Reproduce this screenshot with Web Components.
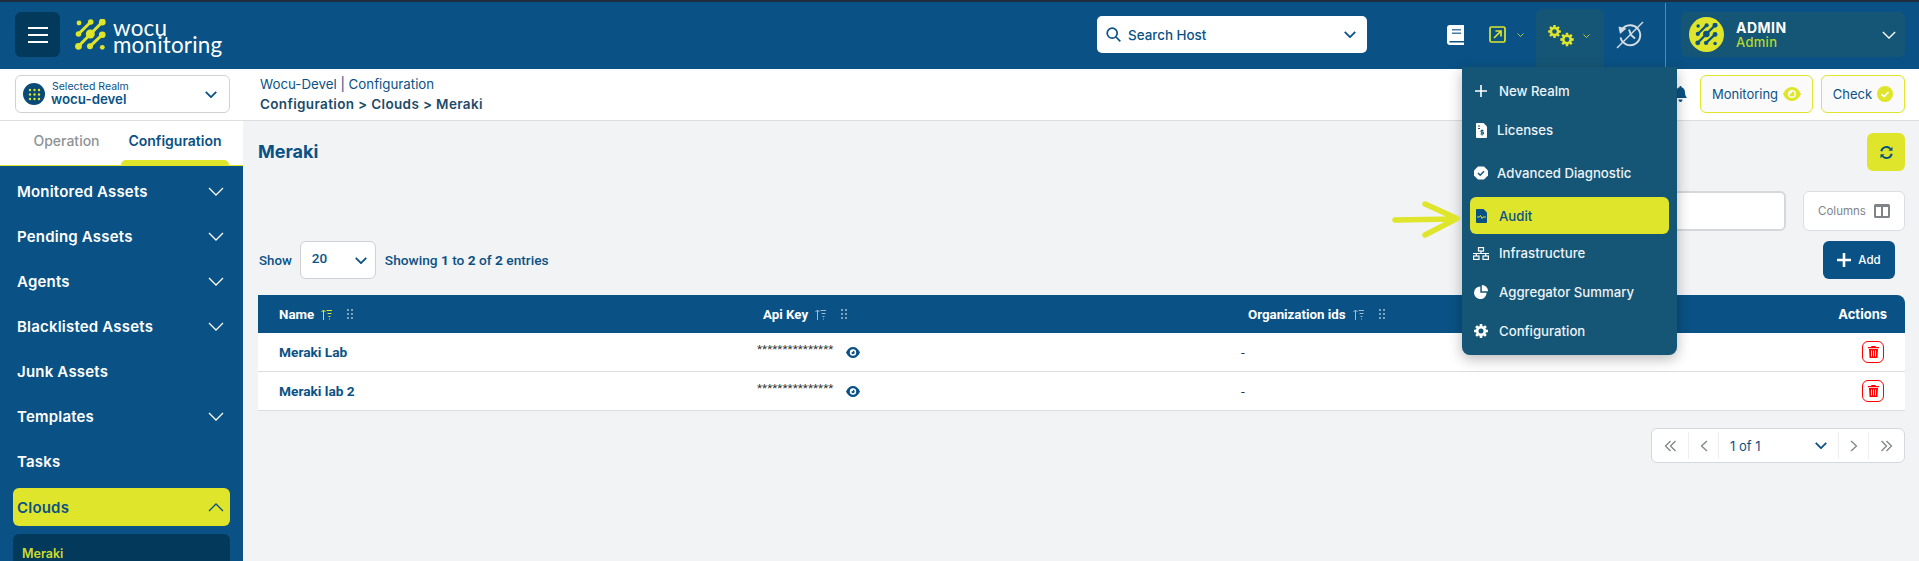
<!DOCTYPE html>
<html lang="en">
<head>
<meta charset="utf-8">
<title>Meraki</title>
<style>
  html, body { margin: 0; height: 561px; overflow: hidden; background: #f2f3f5; }
  body { font-family: Inter, "Liberation Sans", sans-serif; color: #0a5285; }
  wocu-app { width: 1919px; height: 561px; }
</style>
</head>
<body>
<wocu-app></wocu-app>
<script>
const chevron = (w, h, sw, c) => `<svg width="${w}" height="${h}" viewBox="0 0 16 9" fill="none" stroke="${c}" stroke-width="${sw}"><path d="M1 1l7 7 7-7"/></svg>`;
const nodes = (c) => `<g fill="${c}">
  <path fill="none" stroke="${c}" stroke-width="3" d="M27.300 3L3.500 27.300M15.700 3L3.500 15M27.300 15.700L15 27.300"/>
  <circle cx="4" cy="4" r="2.400"/><circle cx="15.700" cy="3" r="2.800"/><circle cx="27.300" cy="3" r="3.400"/>
  <circle cx="3.500" cy="15" r="2.800"/><circle cx="15.300" cy="15" r="4.500"/><circle cx="27.300" cy="15.700" r="3.300"/>
  <circle cx="3.500" cy="27.300" r="3.400"/><circle cx="15" cy="27.300" r="3"/><circle cx="27.300" cy="28.300" r="2.400"/></g>`;
// toothed wheel with a hole, used by the settings icons
const gear = (cx, cy, r, c) => {
  const pts = [];
  for (let i = 0; i < 8; i++) {
    const a = i * Math.PI / 4;
    [[-.30, .72], [-.17, 1], [.17, 1], [.30, .72]].forEach(([o, k]) => {
      pts.push(`${(cx + Math.cos(a + o) * r * k).toFixed(2)} ${(cy + Math.sin(a + o) * r * k).toFixed(2)}`);
    });
  }
  const h = r * .36;
  return `<path fill="${c}" fill-rule="evenodd" d="M${pts.join('L')}zM${cx - h} ${cy}a${h} ${h} 0 1 0 ${h * 2} 0a${h} ${h} 0 1 0 ${-h * 2} 0z"/>`;
};
const icons = {
  burger: `<svg width="20" height="16" viewBox="0 0 20 16" stroke="#fff" stroke-width="2"><path d="M0 1h20M0 8h20M0 15h20"/></svg>`,
  search: `<svg width="15" height="15" viewBox="0 0 15 15" fill="none" stroke="#0a5285" stroke-width="1.700"><circle cx="6.200" cy="6.200" r="5"/><path d="M10 10l4.300 4.300"/></svg>`,
  book: `<svg width="17" height="20" viewBox="0 0 17 20"><path fill="#fff" d="M3 0h14v20H3c-2 0-3-1.300-3-3V3c0-2 1-3 3-3z"/><path fill="#0a5285" opacity=".75" d="M5 4h9v1.500H5zM5 7.500h9V9H5z"/><path fill="#0a5285" d="M2.500 16h14.500v1.500H2.500z"/></svg>`,
  external: `<svg width="17" height="17" viewBox="0 0 17 17" fill="none" stroke="#dfe52a" stroke-width="1.700"><rect x="1" y="1" width="15" height="15" rx="1.500"/><path d="M5 12l7-7M6.500 5H12v5.500"/></svg>`,
  gears: `<svg width="26" height="22" viewBox="0 0 26 22">${gear(6.500, 6.500, 6.500, '#dfe52a')}${gear(19, 14.500, 6.800, '#dfe52a')}</svg>`,
  history: `<svg width="28" height="28" viewBox="0 0 28 28" fill="none" stroke="#d5dde3" stroke-width="1.900"><path d="M6 8.500a10 10 0 1 1-1.500 8"/><path fill="#d5dde3" stroke="none" d="M2.500 5.500L10.500 7.500 4 13z"/><path d="M13 8.500l2 5.500 4 3.500"/><path stroke-width="1.400" d="M1 27L27 1"/></svg>`,
  bell: `<svg width="13" height="16" viewBox="0 0 13 16" fill="#0a5285"><path d="M6.500 0c.7 0 1 .5 1 1.200C10 1.800 11 4 11 6.500c0 3 1 4 2 5.500H0c1-1.500 2-2.500 2-5.500C2 4 3 1.800 5.500 1.200 5.500.5 5.800 0 6.500 0zM4.500 13.500h4c0 1.500-1 2.500-2 2.500s-2-1-2-2.500z"/></svg>`,
  eyeY: `<svg width="18" height="14" viewBox="0 0 18 14"><path fill="#dfe52a" d="M0 7c2-4.500 5.500-7 9-7s7 2.500 9 7c-2 4.500-5.500 7-9 7S2 11.500 0 7z"/><circle cx="9" cy="7" r="4" fill="#fafafa"/><path fill="#dfe52a" d="M9 4.500A2.500 2.500 0 1 1 6.500 7c1.200.4 2.900-1 2.500-2.500z"/></svg>`,
  checkY: `<svg width="16" height="16" viewBox="0 0 16 16"><circle cx="8" cy="8" r="8" fill="#dfe52a"/><path d="M4.500 8.300l2.500 2.300 4.500-4.600" fill="none" stroke="#fff" stroke-width="1.700"/></svg>`,
  refresh: `<svg width="13" height="13" viewBox="0 0 13 13" fill="none" stroke="#0a5285" stroke-width="2"><path d="M1.300 5.200A5.200 5.200 0 0 1 10.500 3"/><path d="M11.700 7.800A5.200 5.200 0 0 1 2.500 10"/><path fill="#0a5285" stroke="none" d="M12.500.8v4H8.500zM.5 12.200v-4h4z"/></svg>`,
  columns: `<svg width="16" height="14" viewBox="0 0 16 14"><path fill="#808488" fill-rule="evenodd" d="M1.500 0h13A1.500 1.500 0 0 1 16 1.500v11a1.500 1.500 0 0 1-1.500 1.500h-13A1.500 1.500 0 0 1 0 12.500v-11A1.500 1.500 0 0 1 1.500 0zM2 3v9h5V3zm7 0v9h5V3z"/></svg>`,
  plus: `<svg width="14" height="14" viewBox="0 0 14 14" stroke="#fff" stroke-width="2.600"><path d="M7 0v14M0 7h14"/></svg>`,
  plusThin: `<svg width="12" height="12" viewBox="0 0 12 12" stroke="#fff" stroke-width="1.600"><path d="M6 0v12M0 6h12"/></svg>`,
  sortY: `<svg width="11" height="11" viewBox="0 0 11 11" fill="none" stroke="#dfe52a" stroke-width="1"><path d="M2.500 11V1M.5 3l2-2 2 2M5.500 1.500H11M6.500 4.500h4M7.500 7.500h2M8 10h1"/></svg>`,
  sort: `<svg width="11" height="11" viewBox="0 0 11 11" fill="none" stroke="#9fbcd0" stroke-width="1"><path d="M2.500 11V1M.5 3l2-2 2 2M5.500 1.500H11M6.500 4.500h4M7.500 7.500h2M8 10h1"/></svg>`,
  grip: `<svg width="6" height="10" viewBox="0 0 6 10" fill="#7fa3bd"><path d="M0 0h2v2H0zM4 0h2v2H4zM0 4h2v2H0zM4 4h2v2H4zM0 8h2v2H0zM4 8h2v2H4z"/></svg>`,
  eye: `<svg width="14" height="11" viewBox="0 0 14 11"><path fill="#0a5285" fill-rule="evenodd" d="M0 5.500C1.500 2 4 0 7 0s5.500 2 7 5.500C12.500 9 10 11 7 11S1.500 9 0 5.500zM7 2.300a3.200 3.200 0 1 0 0 6.400 3.200 3.200 0 0 0 0-6.400z"/><path fill="#0a5285" d="M7 3.800A1.700 1.700 0 1 1 5.300 5.500c.8.200 1.900-.7 1.700-1.700z"/></svg>`,
  trash: `<svg width="11" height="12" viewBox="0 0 11 12"><path fill="#f00" fill-rule="evenodd" d="M3.500 0h4l.5 1h3v1.300H0V1h3zM1 3h9l-.6 9H1.600zM3 4.500v6h1v-6zm2 0v6h1v-6zm2 0v6h1v-6z"/></svg>`,
  first: `<svg width="13" height="12" viewBox="0 0 13 12" fill="none" stroke="#808488" stroke-width="1.300"><path d="M6.500 1l-5 5 5 5M11.500 1l-5 5 5 5"/></svg>`,
  prev: `<svg width="8" height="12" viewBox="0 0 8 12" fill="none" stroke="#808488" stroke-width="1.300"><path d="M7 1L1.500 6 7 11"/></svg>`,
  next: `<svg width="8" height="12" viewBox="0 0 8 12" fill="none" stroke="#808488" stroke-width="1.300"><path d="M1 1l5.500 5L1 11"/></svg>`,
  last: `<svg width="13" height="12" viewBox="0 0 13 12" fill="none" stroke="#808488" stroke-width="1.300"><path d="M1.500 1l5 5-5 5M6.500 1l5 5-5 5"/></svg>`,
  licenses: `<svg width="11" height="15" viewBox="0 0 11 15"><path fill="#fff" d="M1 0h6.500L11 3.500V14a1 1 0 0 1-1 1H1a1 1 0 0 1-1-1V1a1 1 0 0 1 1-1z"/><path stroke="#155676" fill="none" stroke-width="1" d="M2 3h2M2 5.500h2M7.500 7.500H5v1.700h2.500v1.800H4.500M6 6.500v6"/></svg>`,
  diag: `<svg width="14" height="14" viewBox="0 0 14 14"><path fill="#fff" d="M4 .5h6L14 4.500v5L10 13.500H4L0 9.500v-5z"/><path d="M4 7l2.200 2.200L10 5.300" fill="none" stroke="#155676" stroke-width="1.500"/></svg>`,
  audit: `<svg width="11" height="14" viewBox="0 0 11 14"><path fill="#0a5285" d="M1 0h6.500L11 3.500V13a1 1 0 0 1-1 1H1a1 1 0 0 1-1-1V1a1 1 0 0 1 1-1z"/><path d="M1 8h2.500l1-1.500 1.500 3 1-1.500h3" fill="none" stroke="#dfe52a" stroke-width=".9"/></svg>`,
  infra: `<svg width="16" height="13" viewBox="0 0 16 13" fill="none" stroke="#fff" stroke-width="1.200"><rect x="5.500" y=".6" width="5" height="3.400"/><rect x=".6" y="9" width="5.400" height="3.400"/><rect x="10" y="9" width="5.400" height="3.400"/><path d="M8 4v2.500M0 6.500h16M3.300 6.500V9M12.700 6.500V9"/></svg>`,
  pie: `<svg width="14" height="14" viewBox="0 0 14 14" fill="#fff"><path d="M6.300 1.500v6.200h6.300A6.300 6.300 0 1 1 6.300 1.500z"/><path d="M7.800 0A6.200 6.200 0 0 1 14 6.200H7.800z"/></svg>`,
  cog: `<svg width="14" height="14" viewBox="0 0 14 14">${gear(7, 7, 7, '#fff')}</svg>`,
  arrow: `<svg width="68" height="38" viewBox="0 0 68 38" fill="none" stroke="#dfe52a" stroke-width="5.500" stroke-linecap="round" stroke-linejoin="round"><path d="M3 20L62 19M33 4l32 14.500L33 35"/></svg>`
};

class WocuLogo extends HTMLElement {
  connectedCallback() {
    this.attachShadow({ mode: 'open' }).innerHTML = `
      <style>
        :host { display: flex; align-items: center; gap: 7px; margin-left: 15px; color: #fff; }
        .txt { font-family: Lato, sans-serif; font-size: 22.400px; line-height: 17px; font-weight: 400; letter-spacing: .2px; padding-top: 1px; }
      </style>
      <svg width="31" height="33" viewBox="0 0 31 33">${nodes('#dfe52a')}</svg>
      <div class="txt">wocu<br>monitoring</div>`;
  }
}

class WocuHeader extends HTMLElement {
  connectedCallback() {
    this.attachShadow({ mode: 'open' }).innerHTML = `
      <style>
        :host { display: flex; align-items: center; height: 69px; box-sizing: border-box; border-top: 2px solid #1f2d3d; background: #0a5285; padding-left: 15px; position: relative; }
        .burger { width: 45px; height: 45px; margin-top: -2px; border-radius: 6px; background: #033a5c; display: flex; align-items: center; justify-content: center; }
        .search { width: 270px; height: 37px; margin-top: -2px; margin-left: auto; box-sizing: border-box; border-radius: 5px; background: #fff; display: flex; align-items: center; gap: 7px; padding: 0 11px 0 9px; font-size: 13.400px; font-weight: 500; }
        .search span { flex: 1; }
        .tools { display: flex; align-items: center; height: 67px; }
        .book { margin-left: 80px; display: flex; margin-top: -1px; }
        .ext { margin-left: 25px; display: flex; margin-top: -2px; }
        .dn { display: flex; margin-left: 11px; margin-top: -2px; }
        .gears { margin-left: 12px; align-self: flex-end; width: 68px; height: 60px; background: #155676; border-radius: 6px 6px 0 0; display: flex; align-items: center; padding-left: 12px; box-sizing: border-box; padding-bottom: 6px; }
        .gears .dn { margin-top: 0; margin-left: 9px; }
        .hist { margin-left: 12px; display: flex; margin-top: -2px; }
        .div { width: 1px; height: 66px; background: #5a8aa8; margin-left: 21px; }
        slot[name=user]::slotted(*) { margin-left: 15px; margin-right: 14px; }
      </style>
      <div class="burger">${icons.burger}</div>
      <wocu-logo></wocu-logo>
      <div class="search">${icons.search}<span>Search Host</span>${chevron(12, 7, 2.400, '#0a5285')}</div>
      <div class="tools">
        <div class="book">${icons.book}</div>
        <div class="ext">${icons.external}</div>
        <div class="dn">${chevron(7, 4, 1.800, '#dfe52a')}</div>
        <div class="gears">${icons.gears}<div class="dn">${chevron(7, 4, 1.800, '#dfe52a')}</div></div>
        <div class="hist">${icons.history}</div>
        <div class="div"></div>
      </div>
      <slot name="user"></slot>`;
  }
}

class WocuUser extends HTMLElement {
  connectedCallback() {
    this.attachShadow({ mode: 'open' }).innerHTML = `
      <style>
        :host { display: flex; align-items: center; width: 224px; height: 45px; margin-top: -2px; box-sizing: border-box; background: #155676; border-radius: 6px; padding: 0 9px 0 8px; }
        .av { width: 35px; height: 35px; border-radius: 50%; background: #dfe52a; display: flex; align-items: center; justify-content: center; }
        .who { flex: 1; margin-left: 12px; }
        .n { color: #fff; font-size: 14px; font-weight: 700; line-height: 15px; letter-spacing: .5px; }
        .r { color: #b6d92a; font-size: 13px; font-weight: 500; line-height: 15px; letter-spacing: .3px; }
      </style>
      <div class="av"><svg width="23" height="24" viewBox="0 0 31 33">${nodes('#0a5285')}</svg></div>
      <div class="who"><div class="n"><slot name="name"></slot></div><div class="r"><slot name="role"></slot></div></div>
      ${chevron(14, 8, 1.500, '#fff')}`;
  }
}

class WocuSubbar extends HTMLElement {
  connectedCallback() {
    this.attachShadow({ mode: 'open' }).innerHTML = `
      <style>
        :host { display: flex; align-items: center; height: 52px; box-sizing: border-box; background: #fff; border-bottom: 1px solid #dcdde0; padding: 0 14px 1px 15px; }
        .realm { width: 215px; height: 38px; box-sizing: border-box; border: 1px solid #cfd1d4; border-radius: 6px; display: flex; align-items: center; padding: 0 12px 0 7px; }
        .dot { width: 22px; height: 22px; border-radius: 50%; background: #0a4a76; display: flex; align-items: center; justify-content: center; margin-right: 6px; }
        .rt { flex: 1; }
        .rt div:first-child { font-size: 10.500px; line-height: 11px; margin-left: 1px; }
        .rt div:last-child { font-size: 13.300px; font-weight: 600; line-height: 15px; }
        .crumbs { margin-left: 30px; font-size: 13.300px; line-height: 20px; }
        .crumbs b { display: block; font-weight: 600; color: #1d4a68; font-size: 13.500px; letter-spacing: .35px; }
        .bell { margin-left: auto; margin-right: 13px; display: flex; }
        .btn { height: 38px; box-sizing: border-box; border: 1px solid #dfe52a; border-radius: 6px; background: #fafafa; display: flex; align-items: center; justify-content: center; gap: 5px; font-size: 13px; }
        .mon { width: 113px; }
        .chk { width: 84px; margin-left: 8px; }
      </style>
      <div class="realm">
        <div class="dot"><svg width="13" height="13" viewBox="0 0 13 13" fill="#dfe52a"><circle cx="2" cy="2" r="1.200"/><circle cx="6.500" cy="2" r="1.200"/><circle cx="11" cy="2" r="1.200"/><circle cx="2" cy="6.500" r="1.200"/><circle cx="6.500" cy="6.500" r="1.200"/><circle cx="11" cy="6.500" r="1.200"/><circle cx="2" cy="11" r="1.200"/><circle cx="6.500" cy="11" r="1.200"/><circle cx="11" cy="11" r="1.200"/></svg></div>
        <div class="rt"><div>Selected Realm</div><div>wocu-devel</div></div>
        ${chevron(12, 7, 2.400, '#0a5285')}
      </div>
      <div class="crumbs">Wocu-Devel | Configuration<b>Configuration &gt; Clouds &gt; Meraki</b></div>
      <div class="bell">${icons.bell}</div>
      <div class="btn mon">Monitoring ${icons.eyeY}</div>
      <div class="btn chk">Check ${icons.checkY}</div>`;
  }
}

class WocuNavItem extends HTMLElement {
  connectedCallback() {
    const open = this.hasAttribute('open');
    const arrow = this.hasAttribute('arrow') || open;
    const c = open ? '#0a5285' : '#fff';
    this.attachShadow({ mode: 'open' }).innerHTML = `
      <style>
        :host { display: flex; align-items: center; justify-content: space-between; height: 45px; box-sizing: border-box; padding: 0 19px 0 17px; color: ${c}; font-size: 15px; font-weight: 600; letter-spacing: .2px; }
        :host([open]) { height: 38px; margin: 4px 13px 0; padding: 0 6px 0 4px; background: #dfe52a; border-radius: 6px; }
        svg { transform: ${open ? 'rotate(180deg)' : 'none'}; }
      </style>
      <slot></slot>${arrow ? chevron(16, 9, 1.300, c) : ''}`;
  }
}

class WocuSidebar extends HTMLElement {
  connectedCallback() {
    this.attachShadow({ mode: 'open' }).innerHTML = `
      <style>
        :host { display: flex; flex-direction: column; width: 243px; flex: none; background: #0a5285; overflow: hidden; }
        .tabs { flex: none; height: 45px; box-sizing: border-box; background: #fff; border-bottom: 1px solid #dfe52a; display: flex; font-size: 14px; font-weight: 600; }
        .tab { display: flex; justify-content: center; padding-top: 11px; box-sizing: border-box; }
        .op { width: 121px; padding-left: 12px; color: #8f9396; font-weight: 500; }
        .cf { width: 108px; position: relative; }
        .cf::after { content: ""; position: absolute; left: 0; right: 0; bottom: 0; height: 5px; background: #dfe52a; border-radius: 5px 5px 0 0; }
        .nav { flex: none; padding-top: 3px; }
        .sub { margin: 8px 13px 0; height: 60px; background: #033a5c; border-radius: 6px 6px 0 0; padding: 12px 9px; box-sizing: border-box; color: #cfdc2c; font-size: 12.500px; font-weight: 600; }
      </style>
      <div class="tabs"><div class="tab op">Operation</div><div class="tab cf">Configuration</div></div>
      <div class="nav"><slot></slot><div class="sub">Meraki</div></div>`;
  }
}

class WocuTable extends HTMLElement {
  connectedCallback() {
    const rows = ['Meraki Lab', 'Meraki lab 2'].map(n => `
      <div class="c nm">${n}</div>
      <div class="c key"><span>***************</span>${icons.eye}</div>
      <div class="c org">-</div>
      <div class="c act"><div class="del">${icons.trash}</div></div>`).join('');
    this.attachShadow({ mode: 'open' }).innerHTML = `
      <style>
        :host { display: grid; grid-template-columns: 484px 485px 1fr 100px; grid-template-rows: 38px 39px 39px; margin: 16px 0 0 1px; font-family: Roboto, sans-serif; }
        .h { background: #0a5285; color: #fff; display: flex; align-items: center; gap: 7px; padding-left: 21px; font-size: 13.300px; font-weight: 700; }
        .h:first-child { padding-left: 20px; }
        .h svg:last-child { margin-left: 8px; }
        .h:first-child { border-radius: 8px 0 0 0; }
        .h.act { border-radius: 0 8px 0 0; justify-content: flex-end; padding: 0 18px 0 0; font-family: Inter, sans-serif; font-size: 13px; }
        .c { background: #fff; border-bottom: 1px solid #dcdde0; display: flex; align-items: center; box-sizing: border-box; font-size: 13.700px; }
        .nm { padding-left: 21px; font-weight: 700; }
        .key { padding-left: 15px; gap: 13px; color: #333; }
        .key span { font-size: 11.600px; position: relative; top: -3px; letter-spacing: .1px; }
        .org { padding-left: 14px; color: #333; }
        .act { justify-content: flex-end; padding-right: 21px; }
        .del { width: 22px; height: 22px; box-sizing: border-box; border: 1px solid #f00; border-radius: 6px; display: flex; align-items: center; justify-content: center; }
      </style>
      <div class="h">Name ${icons.sortY}${icons.grip}</div>
      <div class="h">Api Key ${icons.sort}${icons.grip}</div>
      <div class="h">Organization ids ${icons.sort}${icons.grip}</div>
      <div class="h act">Actions</div>
      ${rows}`;
  }
}

class WocuPagination extends HTMLElement {
  connectedCallback() {
    this.attachShadow({ mode: 'open' }).innerHTML = `
      <style>
        :host { display: flex; align-self: flex-end; width: 254px; height: 35px; margin-top: 17px; box-sizing: border-box; background: #fff; border: 1px solid #d5d7da; border-radius: 6px; padding: 3px 1px; align-items: stretch; }
        .b { display: flex; align-items: center; justify-content: center; border-right: 1px solid #eeeff1; }
        .sel { flex: 1; display: flex; align-items: center; justify-content: space-between; padding: 0 11px 0 11px; font-size: 13px; border-right: 1px solid #eeeff1; }
      </style>
      <div class="b" style="width:35px">${icons.first}</div>
      <div class="b" style="width:29px">${icons.prev}</div>
      <div class="sel"><span>1 of 1</span>${chevron(12, 7, 2.400, '#0a5285')}</div>
      <div class="b" style="width:29px">${icons.next}</div>
      <div class="b" style="width:34px;border-right:0">${icons.last}</div>`;
  }
}

class WocuPage extends HTMLElement {
  connectedCallback() {
    this.attachShadow({ mode: 'open' }).innerHTML = `
      <style>
        :host { flex: 1; display: flex; flex-direction: column; background: #f2f3f5; padding: 12px 14px 0; box-sizing: border-box; min-width: 0; }
        .title { flex: none; display: flex; justify-content: space-between; align-items: flex-start; padding-left: 1px; height: 38px; font-size: 18px; font-weight: 700; line-height: 37px; }
        .yb { width: 38px; height: 38px; border-radius: 6px; background: #dfe52a; display: flex; align-items: center; justify-content: center; }
        .tools { flex: none; display: flex; justify-content: flex-end; gap: 17px; margin-top: 20px; }
        .inp { width: 300px; height: 40px; box-sizing: border-box; border: 2px solid #d5d7da; border-radius: 6px; background: #fff; }
        .cols { width: 102px; height: 40px; box-sizing: border-box; border: 1px solid #dcdde0; border-radius: 6px; background: #fff; color: #808488; font-size: 11.500px; display: flex; align-items: center; justify-content: center; gap: 8px; }
        .show { flex: none; display: flex; align-items: center; height: 38px; margin-top: 10px; padding-left: 2px; font-family: Roboto, sans-serif; font-size: 13.700px; font-weight: 500; }
        .show b { font-weight: 700; }
        .lbl { font-size: 13.300px; }
        .sel { width: 76px; height: 38px; box-sizing: border-box; margin: 0 9px 0 8px; border: 1px solid #cfd1d4; border-radius: 6px; background: #fff; display: flex; align-items: center; justify-content: space-between; padding: 0 8px 4px 11px; font-size: 13.500px; }
        .sel svg { margin-top: 4px; }
        .add { width: 72px; height: 38px; margin-left: auto; margin-right: 10px; border-radius: 6px; background: #0a5285; color: #fff; display: flex; align-items: center; justify-content: center; gap: 7px; font-family: Inter, sans-serif; font-size: 11.500px; }
      </style>
      <div class="title">Meraki<div class="yb">${icons.refresh}</div></div>
      <div class="tools"><div class="inp"></div><div class="cols">Columns ${icons.columns}</div></div>
      <div class="show"><span class="lbl">Show</span><div class="sel">20 ${chevron(12, 7, 2.400, '#0a5285')}</div>Showing&nbsp;<b>1</b>&nbsp;to&nbsp;<b>2</b>&nbsp;of&nbsp;<b>2</b>&nbsp;entries<div class="add">${icons.plus}Add</div></div>
      <wocu-table></wocu-table>
      <wocu-pagination></wocu-pagination>`;
  }
}

class WocuMenuItem extends HTMLElement {
  connectedCallback() {
    this.attachShadow({ mode: 'open' }).innerHTML = `
      <style>
        :host { display: flex; align-items: center; box-sizing: border-box; height: 38px; margin: 0 8px; padding-left: 3px; border-radius: 6px; color: #eef3f6; font-size: 13.200px; font-weight: 500; }
        :host([active]) { height: 37px; background: #dfe52a; color: #0a5285; }
        i { width: 16px; display: flex; justify-content: center; margin-right: 10px; }
        :host([tight]) i { margin-right: 8px; }
      </style>
      <i>${icons[this.getAttribute('icon')]}</i><slot></slot>`;
  }
}

class WocuMenu extends HTMLElement {
  connectedCallback() {
    this.attachShadow({ mode: 'open' }).innerHTML = `
      <style>
        :host { position: absolute; left: 1462px; top: 67px; width: 215px; height: 288px; box-sizing: border-box; padding-top: 5px; background: #155676; border-radius: 0 0 8px 8px; box-shadow: 0 4px 14px rgba(0,0,0,.28); display: flex; flex-direction: column; }
        .arrow { position: absolute; left: -70px; top: 133px; display: flex; }
        ::slotted(:nth-child(2)) { margin-top: 1px; }
        ::slotted(:nth-child(3)) { margin-top: 5px; }
        ::slotted(:nth-child(4)) { margin-top: 5px; }
        ::slotted(:nth-child(6)) { margin-top: 1px; }
        ::slotted(:nth-child(7)) { margin-top: 1px; }
      </style>
      <div class="arrow">${icons.arrow}</div>
      <slot></slot>`;
  }
}

class WocuApp extends HTMLElement {
  connectedCallback() {
    this.attachShadow({ mode: 'open' }).innerHTML = `
      <style>
        :host { display: flex; flex-direction: column; position: relative; overflow: hidden; }
        .body { display: flex; flex: 1; min-height: 0; }
      </style>
      <wocu-header><wocu-user slot="user"><span slot="name">ADMIN</span><span slot="role">Admin</span></wocu-user></wocu-header>
      <wocu-subbar></wocu-subbar>
      <div class="body">
        <wocu-sidebar>
          <wocu-nav-item arrow>Monitored Assets</wocu-nav-item>
          <wocu-nav-item arrow>Pending Assets</wocu-nav-item>
          <wocu-nav-item arrow>Agents</wocu-nav-item>
          <wocu-nav-item arrow>Blacklisted Assets</wocu-nav-item>
          <wocu-nav-item>Junk Assets</wocu-nav-item>
          <wocu-nav-item arrow>Templates</wocu-nav-item>
          <wocu-nav-item>Tasks</wocu-nav-item>
          <wocu-nav-item open>Clouds</wocu-nav-item>
        </wocu-sidebar>
        <wocu-page></wocu-page>
      </div>
      <wocu-menu>
        <wocu-menu-item icon="plusThin">New Realm</wocu-menu-item>
        <wocu-menu-item icon="licenses" tight>Licenses</wocu-menu-item>
        <wocu-menu-item icon="diag" tight>Advanced Diagnostic</wocu-menu-item>
        <wocu-menu-item icon="audit" active>Audit</wocu-menu-item>
        <wocu-menu-item icon="infra">Infrastructure</wocu-menu-item>
        <wocu-menu-item icon="pie">Aggregator Summary</wocu-menu-item>
        <wocu-menu-item icon="cog">Configuration</wocu-menu-item>
      </wocu-menu>`;
  }
}

customElements.define('wocu-logo', WocuLogo);
customElements.define('wocu-user', WocuUser);
customElements.define('wocu-header', WocuHeader);
customElements.define('wocu-subbar', WocuSubbar);
customElements.define('wocu-nav-item', WocuNavItem);
customElements.define('wocu-sidebar', WocuSidebar);
customElements.define('wocu-table', WocuTable);
customElements.define('wocu-pagination', WocuPagination);
customElements.define('wocu-page', WocuPage);
customElements.define('wocu-menu-item', WocuMenuItem);
customElements.define('wocu-menu', WocuMenu);
customElements.define('wocu-app', WocuApp);
</script>
</body>
</html>
